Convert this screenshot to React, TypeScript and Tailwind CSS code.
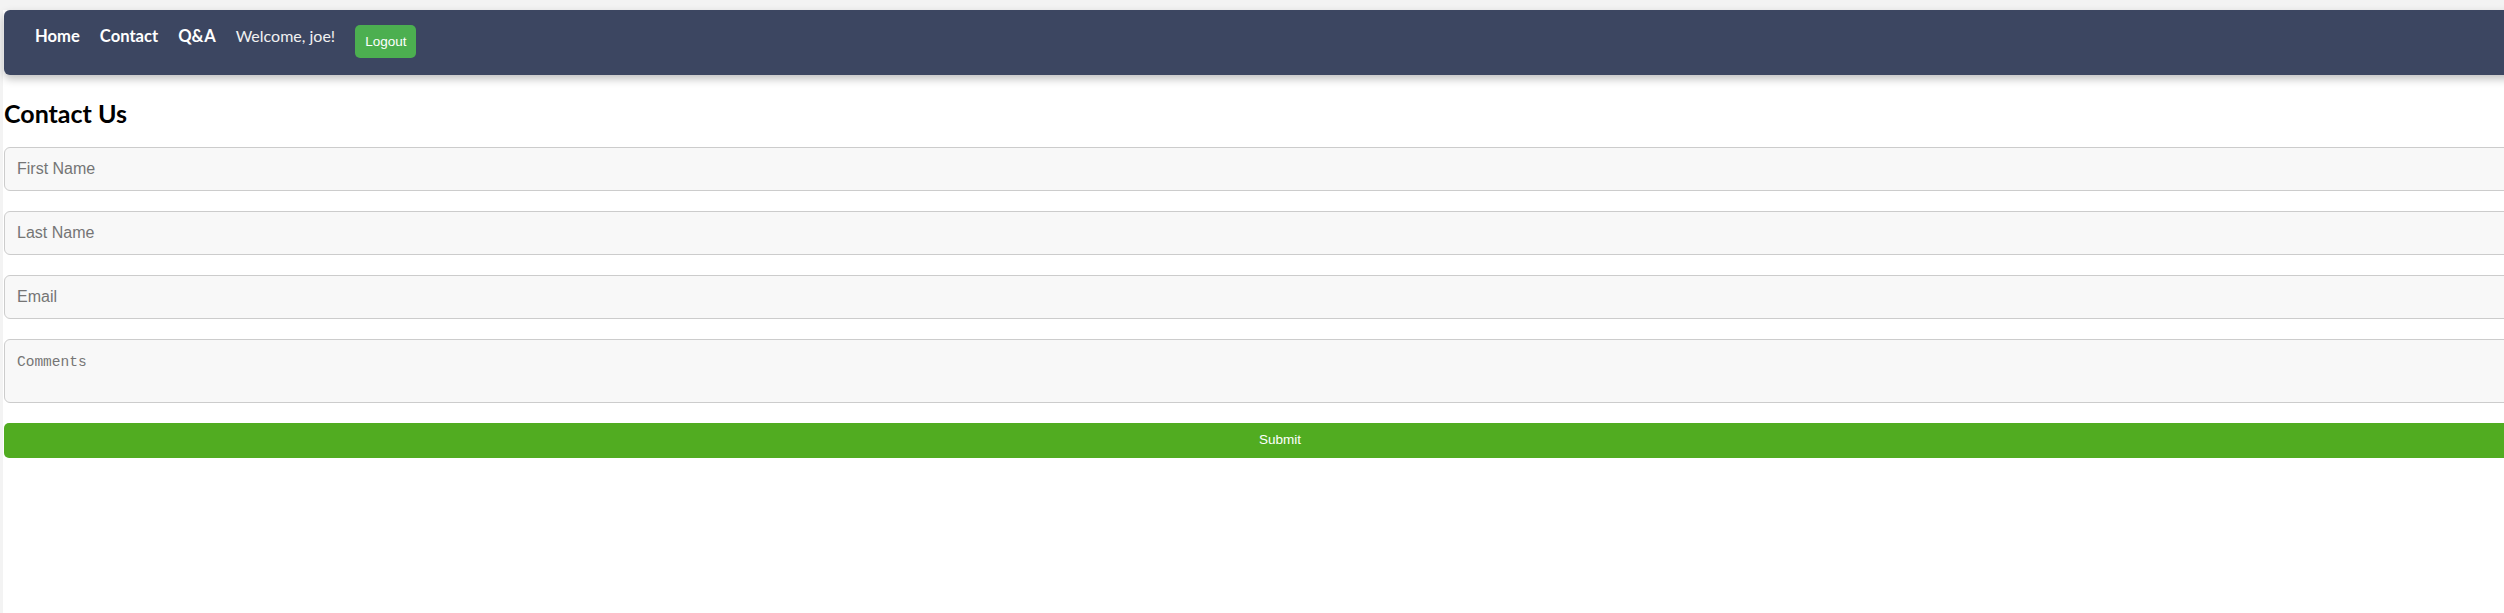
const navLinks = ['Home', 'Contact', 'Q&A'];

const fields = ['First Name', 'Last Name', 'Email'];

const App = () => {
  return (
    <div className="min-h-screen overflow-hidden bg-[#f3f3f3] pl-[3px] pt-[10px]">
      <div className="min-h-[603px] w-[2553px] bg-white pl-px">
        <nav className="flex h-[65px] items-start gap-5 rounded-md bg-[#3c4661] pl-[31px] pt-[14px] font-['Lato',sans-serif] text-[16.6px] leading-6 text-white shadow-[0_4px_8px_rgba(0,0,0,0.25)]">
          {navLinks.map((link) => (
            <a key={link} href="#" className="font-bold">
              {link}
            </a>
          ))}
          <span className="text-[16px] text-[#f1f1f1]">Welcome, joe!</span>
          <button className="mt-px h-[33px] rounded-[5px] bg-[#4caf50] px-[10px] font-['Liberation_Sans',Arial,sans-serif] text-[13.5px] text-white">
            Logout
          </button>
        </nav>

        <h2 className="mt-[22px] font-['Lato',sans-serif] text-[25px] font-bold leading-8 text-black">
          Contact Us
        </h2>

        <form className="mt-[18px] flex flex-col gap-5 font-['Liberation_Sans',Arial,sans-serif]">
          {fields.map((field) => (
            <input
              key={field}
              type="text"
              placeholder={field}
              className="h-[44px] w-full rounded-[6px] border border-[#cccccc] bg-[#f8f8f8] px-3 text-[16px] placeholder:text-[#757575]"
            />
          ))}
          <textarea
            placeholder="Comments"
            className="h-[64px] w-full resize-none rounded-[6px] border border-[#cccccc] bg-[#f8f8f8] p-3 font-['Liberation_Mono',monospace] text-[14.5px] leading-5 placeholder:text-[#757575]"
          />
          <button
            type="submit"
            className="h-[35px] w-full rounded-[5px] bg-[#51ac21] text-[13.5px] text-white"
          >
            Submit
          </button>
        </form>
      </div>
    </div>
  );
};

export default App;
